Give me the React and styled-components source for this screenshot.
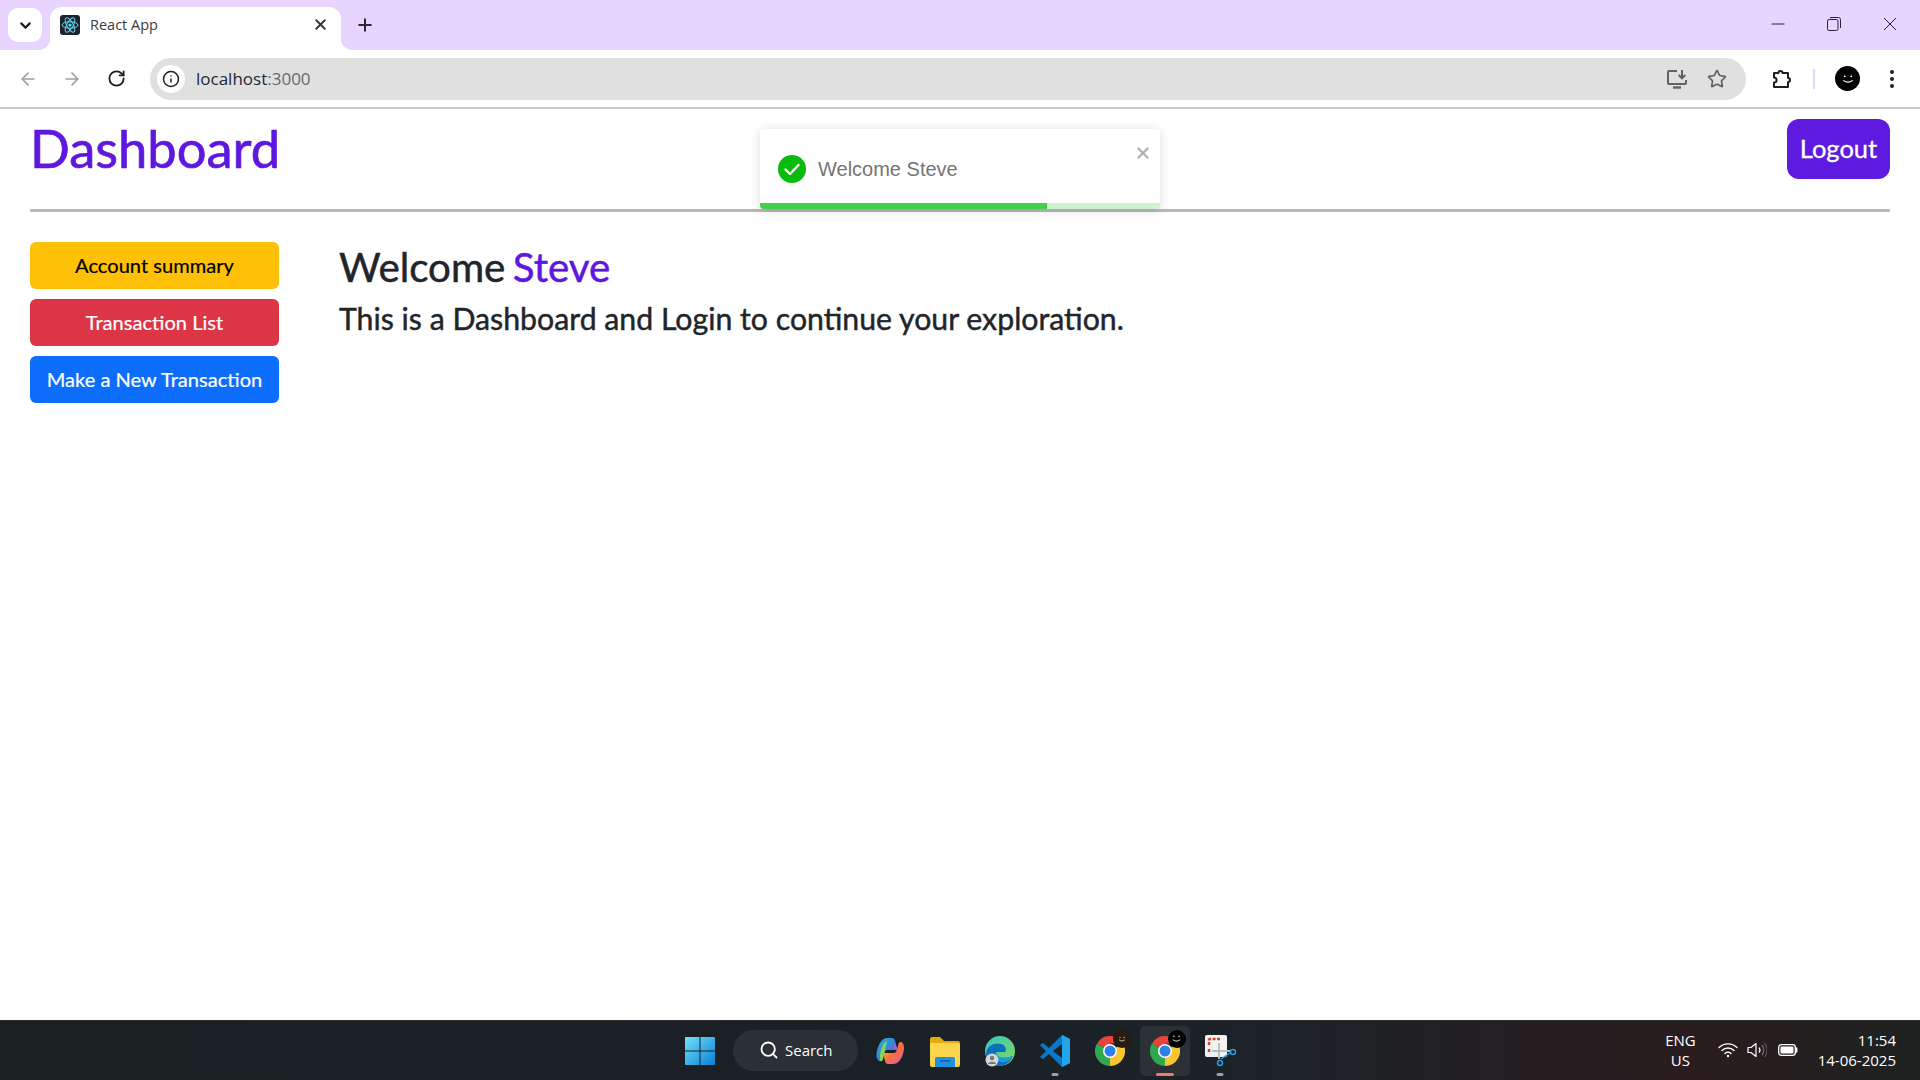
import React from "react";
import styled, { createGlobalStyle } from "styled-components";
import { ArrowLeft, ArrowRight, RotateCw, Info, Star, Plus, X, ChevronDown, Search } from "lucide-react";

const GlobalStyle = createGlobalStyle`
  html, body { margin: 0; padding: 0; height: 100%; background: #fff; overflow: hidden; }
  body { font-family: "Lato", "Liberation Sans", sans-serif; }
  #root { height: 100%; }
`;

const Screen = styled.div`
  height: 100vh;
  display: flex;
  flex-direction: column;
`;

const TabStrip = styled.div`
  height: 50px;
  flex: none;
  background: #e8d5ff;
  display: flex;
  align-items: flex-end;
  padding-left: 8px;
`;

const TabMenu = styled.div`
  width: 34px;
  height: 34px;
  margin-bottom: 8px;
  background: #fff;
  border-radius: 10px;
  display: flex;
  align-items: center;
  justify-content: center;
  color: #1f1f1f;
`;

const Tab = styled.div`
  position: relative;
  width: 291px;
  height: 43px;
  margin-left: 8px;
  background: #fff;
  border-radius: 12px 12px 0 0;
  display: flex;
  align-items: center;
  padding: 0 12px 8px 10px;
  box-sizing: border-box;
  &::before, &::after {
    content: "";
    position: absolute;
    bottom: 0;
    width: 12px;
    height: 12px;
  }
  &::before {
    left: -12px;
    background: radial-gradient(circle at 0 0, transparent 12px, #fff 12.5px);
  }
  &::after {
    right: -12px;
    background: radial-gradient(circle at 100% 0, transparent 12px, #fff 12.5px);
  }
`;

const TabTitle = styled.span`
  flex: 1;
  margin-left: 10px;
  font: 14.5px "Open Sans", "Liberation Sans", sans-serif;
  color: #3c3c3c;
`;

const NewTab = styled.div`
  margin: 0 0 8px 7px;
  height: 34px;
  width: 34px;
  display: flex;
  align-items: center;
  justify-content: center;
  color: #2a2a33;
`;

const WindowControls = styled.div`
  margin-left: auto;
  height: 100%;
  display: flex;
  align-items: center;
  padding: 0 2px 2px 0;
  box-sizing: border-box;
`;

const WindowButton = styled.div`
  width: 56px;
  height: 30px;
  display: flex;
  align-items: center;
  justify-content: center;
`;

const Toolbar = styled.div`
  height: 57px;
  flex: none;
  background: #fff;
  border-radius: 12px 12px 0 0;
  border-bottom: 2px solid #c9c9c9;
  display: flex;
  align-items: center;
  padding: 0 0 0 6px;
`;

const ToolIcon = styled.div`
  width: ${(p) => p.$w || 44}px;
  height: 40px;
  flex: none;
  display: flex;
  align-items: center;
  justify-content: center;
  color: ${(p) => p.$color || "#1f1f1f"};
`;

const Omnibox = styled.div`
  width: 1596px;
  height: 42px;
  margin: 0 14px 0 12px;
  flex: none;
  background: #e0e0e0;
  border-radius: 21px;
  display: flex;
  align-items: center;
  padding: 0 9px 0 7px;
  box-sizing: border-box;
`;

const InfoBadge = styled.div`
  width: 28px;
  height: 28px;
  border-radius: 50%;
  background: #fff;
  display: flex;
  align-items: center;
  justify-content: center;
  color: #1f1f1f;
`;

const Url = styled.div`
  flex: 1;
  margin-left: 11px;
  font: 17px "Open Sans", "Liberation Sans", sans-serif;
  color: #1f2937;
  span { color: #5f6b7a; }
`;

const ToolDivider = styled.div`
  width: 2px;
  height: 20px;
  margin: 0 10px 0 9px;
  background: #e8d5ff;
  flex: none;
`;

const Avatar = styled.div`
  width: 25px;
  height: 25px;
  margin: 0 10px;
  flex: none;
  border-radius: 50%;
  background: #000;
  display: flex;
  align-items: center;
  justify-content: center;
`;

const Page = styled.main`
  flex: 1;
  position: relative;
  padding: 0 30px;
  min-height: 0;
`;

const Header = styled.header`
  height: 100px;
  border-bottom: 3px solid #b9b9b9;
  display: flex;
  justify-content: space-between;
  align-items: flex-start;
`;

const Title = styled.h1`
  margin: 6px 0 0;
  width: 249px;
  font-size: 52.5px;
  line-height: 66px;
  font-weight: 400;
  -webkit-text-stroke: 0.7px #5e17de;
  color: #5e17de;
  white-space: nowrap;
`;

const LogoutButton = styled.button`
  margin-top: 10px;
  width: 103px;
  height: 60px;
  border: 0;
  border-radius: 12px;
  background: #5e1adf;
  color: #fff;
  font: 400 25.5px "Lato", sans-serif;
  -webkit-text-stroke: 0.3px #fff;
  padding: 0 0 3px;
`;

const Toast = styled.div`
  position: absolute;
  left: 760px;
  top: 20px;
  width: 400px;
  height: 80px;
  background: #fff;
  border-radius: 4px;
  box-shadow: 0 1px 10px rgba(0, 0, 0, 0.1), 0 2px 15px rgba(0, 0, 0, 0.05);
  overflow: hidden;
  display: flex;
  align-items: center;
  padding: 0 0 0 18px;
  box-sizing: border-box;
`;

const ToastText = styled.span`
  margin-left: 12px;
  font: 20px "Liberation Sans", Arial, sans-serif;
  color: #757575;
`;

const ToastClose = styled.div`
  position: absolute;
  top: 15px;
  right: 8px;
  color: #b0b0b0;
  display: flex;
`;

const ProgressTrack = styled.div`
  position: absolute;
  left: 0;
  right: 0;
  bottom: 0;
  height: 6px;
  background: #cdf2d0;
`;

const ProgressFill = styled.div`
  height: 100%;
  background: #43cf47;
`;

const Body = styled.div`
  display: flex;
  padding-top: 30px;
`;

const Sidebar = styled.nav`
  width: 249px;
  display: flex;
  flex-direction: column;
  gap: 10px;
  flex: none;
`;

const SideButton = styled.button`
  height: 47px;
  border: 0;
  border-radius: 6px;
  background: ${(p) => p.$bg};
  color: ${(p) => p.$fg};
  font: 20.1px "Lato", sans-serif;
  -webkit-text-stroke: 0.2px ${(p) => p.$fg};
  padding: 0 0 1px;
`;

const Content = styled.section`
  margin-left: 60px;
  padding-top: 1px;
  color: #212529;
`;

const Welcome = styled.h2`
  margin: 0;
  font-size: 40.3px;
  line-height: 48px;
  font-weight: 400;
  word-spacing: -3px;
  -webkit-text-stroke: 0.5px #212529;
  span { color: #5e17de; -webkit-text-stroke: 0.5px #5e17de; }
`;

const Subtitle = styled.h4`
  margin: 9px 0 0;
  font-size: 30.25px;
  line-height: 36px;
  font-weight: 400;
  -webkit-text-stroke: 0.45px #212529;
  white-space: nowrap;
`;

const Taskbar = styled.footer`
  height: 60px;
  flex: none;
  box-sizing: border-box;
  border-top: 1px solid #2c3033;
  background: linear-gradient(90deg, #1b2022 0%, #1a2126 45%, #1b2328 65%, #2a1c1e 88%, #1d2221 100%);
  display: grid;
  grid-template-columns: 1fr auto 1fr;
  align-items: center;
  color: #fff;
`;

const TaskCenter = styled.div`
  grid-column: 2;
  display: flex;
  align-items: center;
`;

const AppSlot = styled.div`
  position: relative;
  width: 50px;
  height: 50px;
  margin: 0 2.5px;
  display: flex;
  align-items: center;
  justify-content: center;
  border-radius: 5px;
  background: ${(p) => (p.$active ? "#2b3135" : "transparent")};
`;

const AppDot = styled.div`
  position: absolute;
  bottom: 0;
  left: 50%;
  transform: translateX(-50%);
  width: ${(p) => (p.$active ? 18 : 7)}px;
  height: 3px;
  border-radius: 2px;
  background: ${(p) => (p.$active ? "#f27a6a" : "#9a9fa3")};
`;

const SearchPill = styled.div`
  width: 125px;
  height: 41px;
  margin: 0 4px 0 5.5px;
  border-radius: 21px;
  background: #2a3036;
  display: flex;
  align-items: center;
  justify-content: center;
  gap: 6px;
  padding-bottom: 1px;
  box-sizing: border-box;
  font: 15px "Open Sans", sans-serif;
`;

const Tray = styled.div`
  grid-column: 3;
  justify-self: end;
  display: flex;
  align-items: center;
  padding: 0 24px 2px 0;
`;

const Lang = styled.div`
  text-align: center;
  font: 15px/20px "Open Sans", sans-serif;
  margin-right: 22px;
`;

const TrayIcons = styled.div`
  display: flex;
  align-items: center;
  gap: 11px;
  margin-right: 20px;
  svg:first-child { margin-right: -2px; }
`;

const Clock = styled.div`
  text-align: right;
  font: 15px/20px "Open Sans", sans-serif;
`;

const Badge = styled.div`
  position: absolute;
  top: 4px;
  right: 4px;
  width: 18px;
  height: 18px;
  border-radius: 50%;
  background: ${(p) => p.$bg};
  display: flex;
  align-items: center;
  justify-content: center;
`;

function ReactLogo() {
  return (
    <svg width="20" height="20" viewBox="0 0 20 20">
      <rect width="20" height="20" rx="3" fill="#20232a" />
      <g fill="none" stroke="#61dafb" strokeWidth="1">
        <ellipse cx="10" cy="10" rx="8" ry="3.2" />
        <ellipse cx="10" cy="10" rx="8" ry="3.2" transform="rotate(60 10 10)" />
        <ellipse cx="10" cy="10" rx="8" ry="3.2" transform="rotate(120 10 10)" />
      </g>
      <circle cx="10" cy="10" r="1.6" fill="#61dafb" />
    </svg>
  );
}

function Smile({ size = 12 }) {
  return (
    <svg width={size} height={size} viewBox="0 0 12 12" fill="none" stroke="#fff">
      <circle cx="3.6" cy="4" r="0.7" fill="#fff" stroke="none" />
      <circle cx="8.4" cy="4" r="0.7" fill="#fff" stroke="none" />
      <path d="M2.8 7.2c1.6 1.6 4.8 1.6 6.4 0" strokeWidth="0.9" strokeLinecap="round" />
    </svg>
  );
}

function InstallIcon() {
  return (
    <svg width="22" height="22" viewBox="0 0 22 22" fill="none" stroke="#5f6368" strokeWidth="2">
      <path d="M11 3H3a1 1 0 0 0-1 1v11a1 1 0 0 0 1 1h16a1 1 0 0 0 1-1v-3" />
      <path d="M7 19.5h8" strokeWidth="2.4" />
      <path d="M16 2v8M12.7 7l3.3 3.3L19.3 7" />
    </svg>
  );
}

function PuzzleIcon() {
  return (
    <svg width="22" height="22" viewBox="0 0 22 22" fill="none" stroke="#1f1f1f" strokeWidth="2" strokeLinejoin="round">
      <path d="M3 5h4.5a2 2 0 0 1 4 0H17v5a2 2 0 0 1 0 4v5H3v-4.4a2.6 2.6 0 0 0 0-5.2z" />
    </svg>
  );
}

function KebabIcon() {
  return (
    <svg width="6" height="20" viewBox="0 0 6 20" fill="#1f1f1f">
      <circle cx="3" cy="3" r="2" />
      <circle cx="3" cy="10" r="2" />
      <circle cx="3" cy="17" r="2" />
    </svg>
  );
}

function MinimizeIcon() {
  return (
    <svg width="14" height="14" viewBox="0 0 14 14" stroke="#2b2433" strokeWidth="1">
      <path d="M0.5 7h13" />
    </svg>
  );
}

function RestoreIcon() {
  return (
    <svg width="14" height="14" viewBox="0 0 14 14" fill="none" stroke="#2b2433" strokeWidth="1">
      <rect x="0.5" y="2.5" width="10.5" height="11" rx="1.6" />
      <path d="M3 .5h8.5a2 2 0 0 1 2 2V11" />
    </svg>
  );
}

function CloseIcon() {
  return (
    <svg width="14" height="14" viewBox="0 0 14 14" stroke="#2b2433" strokeWidth="1">
      <path d="M1 1l12 12M13 1L1 13" />
    </svg>
  );
}

function ToastCheck() {
  return (
    <svg width="28" height="28" viewBox="0 0 28 28">
      <circle cx="14" cy="14" r="14" fill="#07bc0c" />
      <path d="M7.5 14.5l4.5 4.5 8.5-9" fill="none" stroke="#fff" strokeWidth="2.4" strokeLinecap="round" strokeLinejoin="round" />
    </svg>
  );
}

function WindowsLogo() {
  return (
    <svg width="30" height="30" viewBox="0 0 30 30">
      <defs>
        <linearGradient id="win" x1="0" y1="0" x2="1" y2="1">
          <stop offset="0" stopColor="#6fe3fb" />
          <stop offset="1" stopColor="#0a7fd6" />
        </linearGradient>
      </defs>
      <path d="M1 1h13.5v13.5H0V2a1 1 0 0 1 1-1zM15.5 1H29a1 1 0 0 1 1 1v12.5H15.5zM0 15.5h14.5V29H1a1 1 0 0 1-1-1zM15.5 15.5H30V28a1 1 0 0 1-1 1H15.5z" fill="url(#win)" />
    </svg>
  );
}

function CopilotIcon() {
  return (
    <svg width="30" height="30" viewBox="0 0 30 30">
      <defs>
        <linearGradient id="cpA" x1="0" y1="0" x2="1" y2="1">
          <stop offset="0" stopColor="#28b0c8" />
          <stop offset="0.6" stopColor="#3f7ce0" />
          <stop offset="1" stopColor="#8a5ce0" />
        </linearGradient>
        <linearGradient id="cpB" x1="0" y1="0" x2="1" y2="1">
          <stop offset="0" stopColor="#ffd24a" />
          <stop offset="0.5" stopColor="#f5703c" />
          <stop offset="1" stopColor="#e45ab0" />
        </linearGradient>
      </defs>
      <path d="M12 2h5c2 0 2.500 1 3 3l2.500 9H13c-3 0-3.500 2-4.500 5l-1 4c-.5 2-2 3-3.500 2C1 23 1 18 2.500 13 4 8 7 2 12 2z" fill="url(#cpA)" />
      <path d="M8 17h10c3 0 3.500-2 4.500-5l1-4c.6-1.800 2-2.500 3.500-1.500C29.500 8.500 29.500 13 28 18c-1.500 5-5 10-10 10h-5c-2 0-2.500-1-3-3z" fill="url(#cpB)" />
      <path d="M5 18c1.500-6 3-11 7-13l-3 14-1 4c-.5 2-2 3-3 1.500z" fill="#7fd85a" />
      <path d="M20.500 7l2 7-4.500-1z" fill="#b44fd8" />
    </svg>
  );
}

function FolderIcon() {
  return (
    <svg width="30" height="32" viewBox="0 0 30 32">
      <path d="M0 4a2 2 0 0 1 2-2h8l4 4h14a2 2 0 0 1 2 2v4H0z" fill="#e8a90f" />
      <path d="M0 8h28a2 2 0 0 1 2 2v20a2 2 0 0 1-2 2H2a2 2 0 0 1-2-2z" fill="#fcd54f" />
      <path d="M5 32v-8a2 2 0 0 1 2-2h16a2 2 0 0 1 2 2v8z" fill="#1f8fe0" />
      <path d="M10 26h10" stroke="#0c5ca8" strokeWidth="1.500" />
    </svg>
  );
}

function EdgeIcon() {
  return (
    <svg width="32" height="32" viewBox="0 0 32 32">
      <defs>
        <linearGradient id="edgeA" x1="0" y1="0" x2="1" y2="1">
          <stop offset="0" stopColor="#36c5c0" />
          <stop offset="1" stopColor="#7fdc55" />
        </linearGradient>
      </defs>
      <circle cx="16" cy="16" r="15" fill="url(#edgeA)" />
      <path d="M2 20C2 11 10 7 17 9c5 1.500 6 6 4 8h-9c0 5 6 8 17 4-3 7-9 10-14 10C8 31 2 27 2 20z" fill="#0c6fc0" />
      <path d="M12 17c0 5 6 8 17 4-2 4-7 7-12 6-4-1-7-5-5-10z" fill="#1c9ae0" />
      <circle cx="8" cy="25" r="6.500" fill="#d6d6d6" />
      <circle cx="8" cy="23" r="2.200" fill="#777" />
      <path d="M4 29c.5-3 7.500-3 8 0z" fill="#777" />
    </svg>
  );
}

function VsCodeIcon() {
  return (
    <svg width="30" height="32" viewBox="0 0 30 32">
      <path d="M22 0l8 4v24l-8 4L9 19l-6 5-3-2 6-6-6-6 3-2 6 5z" fill="#0a78c8" />
      <path d="M22 0l8 4v24l-8 4z" fill="#23a5ec" />
      <path d="M22 9v14l-9-7z" fill="#1c2327" />
    </svg>
  );
}

function ChromeIcon() {
  return (
    <svg width="30" height="30" viewBox="0 0 30 30">
      <path d="M15 15L2 7.500A15 15 0 0 1 28 7.500H15z" fill="#e8443a" />
      <path d="M15 15L28 7.500A15 15 0 0 1 15 30z" fill="#fbc531" />
      <path d="M15 15L15 30A15 15 0 0 1 2 7.500z" fill="#2fa84f" />
      <circle cx="15" cy="15" r="7" fill="#fff" />
      <circle cx="15" cy="15" r="5.500" fill="#2f7fe8" />
    </svg>
  );
}

function SnipIcon() {
  return (
    <svg width="30" height="32" viewBox="0 0 30 32" overflow="visible">
      <rect x="0" y="0" width="22" height="22" rx="2" fill="#f2f2f2" />
      <path d="M4 10V5a1 1 0 0 1 1-1h10M4 14v3" fill="none" stroke="#d8402f" strokeWidth="2.500" strokeDasharray="3 1.500" />
      <path d="M14 8v16M7 16h18" stroke="#b9bfc5" strokeWidth="2" />
      <path d="M16 24l9-6" stroke="#2a9adf" strokeWidth="1.500" />
      <circle cx="15" cy="28" r="2.500" fill="none" stroke="#2a9adf" strokeWidth="1.500" />
      <circle cx="28" cy="17" r="2.500" fill="none" stroke="#2a9adf" strokeWidth="1.500" />
    </svg>
  );
}

function WifiIcon() {
  return (
    <svg width="20" height="16" viewBox="0 0 20 16" fill="none" stroke="#fff" strokeWidth="1.400" strokeLinecap="round">
      <path d="M1 5.500a13 13 0 0 1 18 0" />
      <path d="M4 8.500a8.600 8.600 0 0 1 12 0" />
      <path d="M7 11.500a4.300 4.300 0 0 1 6 0" />
      <circle cx="10" cy="14" r="1.200" fill="#fff" stroke="none" />
    </svg>
  );
}

function VolumeIcon() {
  return (
    <svg width="20" height="18" viewBox="0 0 20 18" fill="none" stroke="#fff" strokeWidth="1.200">
      <path d="M1 6.500h3L9 2.500v13l-5-4H1z" strokeLinejoin="round" />
      <path d="M12 6.500a4 4 0 0 1 0 5" />
      <path d="M15 4a8 8 0 0 1 0 10" stroke="#777" />
      <path d="M17.500 2a11 11 0 0 1 0 14" stroke="#555" />
    </svg>
  );
}

function BatteryIcon() {
  return (
    <svg width="20" height="12" viewBox="0 0 20 12" fill="none">
      <rect x="0.700" y="0.700" width="16.600" height="10.600" rx="2.500" stroke="#fff" strokeWidth="1.300" />
      <rect x="2.500" y="2.500" width="13" height="7" rx="1" fill="#fff" />
      <path d="M18.700 4v4" stroke="#fff" strokeWidth="1.400" strokeLinecap="round" />
    </svg>
  );
}

const sideItems = [
  { label: "Account summary", bg: "#ffc107", fg: "#000" },
  { label: "Transaction List", bg: "#dc3545", fg: "#fff" },
  { label: "Make a New Transaction", bg: "#0d6efd", fg: "#fff" },
];

export default function App() {
  return (
    <Screen>
      <GlobalStyle />
      <TabStrip>
        <TabMenu><ChevronDown size={17} strokeWidth={3} /></TabMenu>
        <Tab>
          <ReactLogo />
          <TabTitle>React App</TabTitle>
          <X size={17} strokeWidth={2.6} color="#333" />
        </Tab>
        <NewTab><Plus size={20} strokeWidth={2.4} /></NewTab>
        <WindowControls>
          <WindowButton><MinimizeIcon /></WindowButton>
          <WindowButton><RestoreIcon /></WindowButton>
          <WindowButton><CloseIcon /></WindowButton>
        </WindowControls>
      </TabStrip>
      <Toolbar>
        <ToolIcon $color="#a0a0a0"><ArrowLeft size={20} strokeWidth={2} /></ToolIcon>
        <ToolIcon $color="#a0a0a0"><ArrowRight size={20} strokeWidth={2} /></ToolIcon>
        <ToolIcon><RotateCw size={19} strokeWidth={2.3} /></ToolIcon>
        <Omnibox>
          <InfoBadge><Info size={18} strokeWidth={2} /></InfoBadge>
          <Url>localhost<span>:3000</span></Url>
          <ToolIcon $w={40}><InstallIcon /></ToolIcon>
          <ToolIcon $w={40} $color="#5f6368"><Star size={20} strokeWidth={2} /></ToolIcon>
        </Omnibox>
        <ToolIcon $w={44}><PuzzleIcon /></ToolIcon>
        <ToolDivider />
        <Avatar><Smile size={16} /></Avatar>
        <ToolIcon $w={44}><KebabIcon /></ToolIcon>
      </Toolbar>
      <Page>
        <Header>
          <Title>Dashboard</Title>
          <LogoutButton>Logout</LogoutButton>
        </Header>
        <Toast>
          <ToastCheck />
          <ToastText>Welcome Steve</ToastText>
          <ToastClose><X size={18} strokeWidth={3} /></ToastClose>
          <ProgressTrack><ProgressFill style={{ width: "71.7%" }} /></ProgressTrack>
        </Toast>
        <Body>
          <Sidebar>
            {sideItems.map((item) => (
              <SideButton key={item.label} $bg={item.bg} $fg={item.fg}>{item.label}</SideButton>
            ))}
          </Sidebar>
          <Content>
            <Welcome>Welcome <span>Steve</span></Welcome>
            <Subtitle>This is a Dashboard and Login to continue your exploration.</Subtitle>
          </Content>
        </Body>
      </Page>
      <Taskbar>
        <TaskCenter>
          <AppSlot><WindowsLogo /></AppSlot>
          <SearchPill><Search size={20} strokeWidth={2.2} />Search</SearchPill>
          <AppSlot><CopilotIcon /></AppSlot>
          <AppSlot><FolderIcon /></AppSlot>
          <AppSlot><EdgeIcon /></AppSlot>
          <AppSlot><VsCodeIcon /><AppDot /></AppSlot>
          <AppSlot>
            <ChromeIcon />
            <Badge $bg="#2a1a10"><Smile size={10} /></Badge>
          </AppSlot>
          <AppSlot $active>
            <ChromeIcon />
            <Badge $bg="#000"><Smile size={13} /></Badge>
            <AppDot $active />
          </AppSlot>
          <AppSlot><SnipIcon /><AppDot /></AppSlot>
        </TaskCenter>
        <Tray>
          <Lang>ENG<br />US</Lang>
          <TrayIcons>
            <WifiIcon />
            <VolumeIcon />
            <BatteryIcon />
          </TrayIcons>
          <Clock>11:54<br />14-06-2025</Clock>
        </Tray>
      </Taskbar>
    </Screen>
  );
}
